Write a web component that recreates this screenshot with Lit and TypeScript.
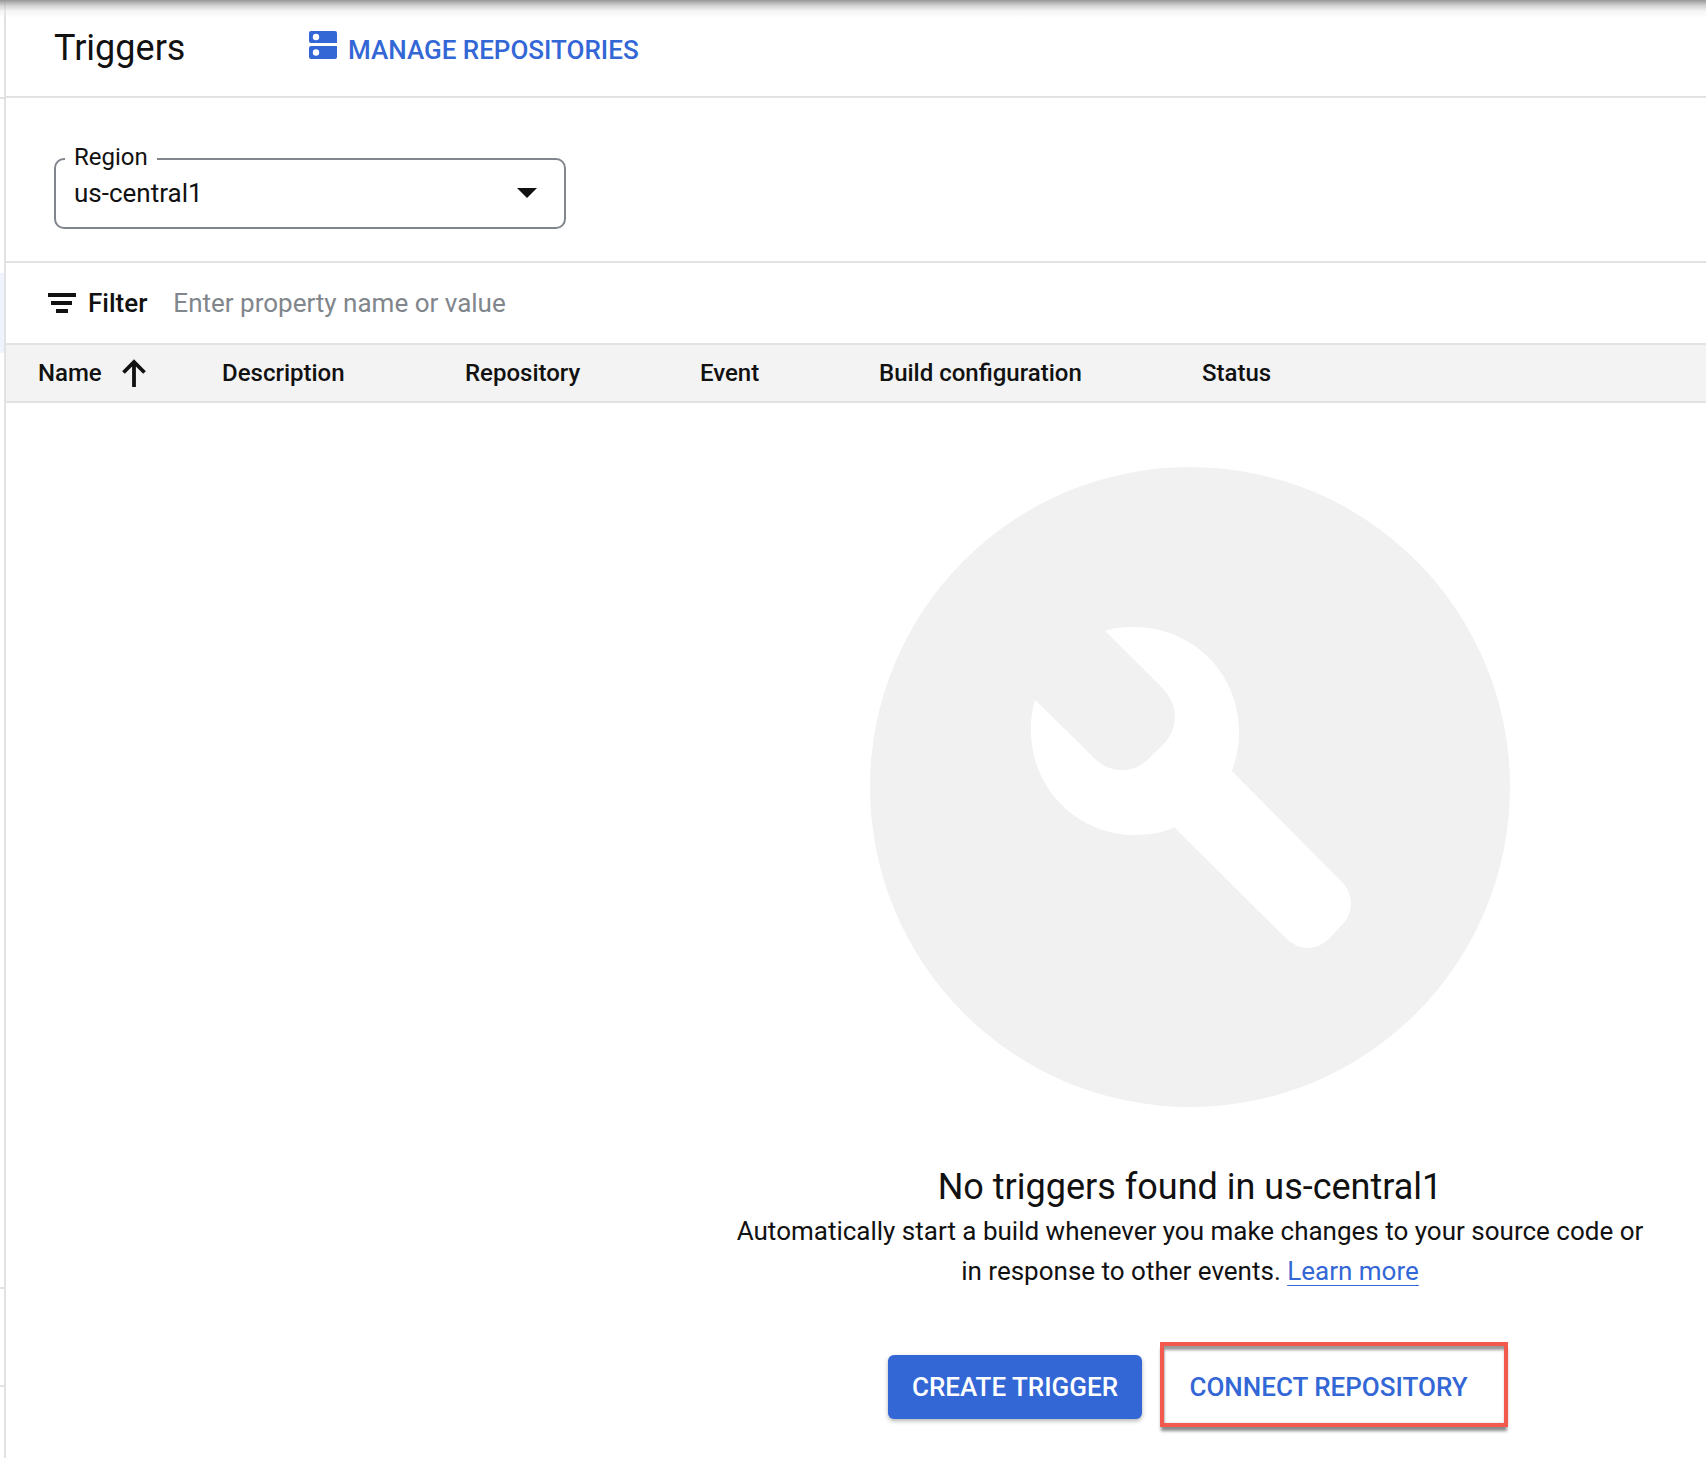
import { LitElement, css, html, svg } from "lit";
import { customElement } from "lit/decorators.js";

const COLUMNS = ["Description", "Repository", "Event", "Build configuration", "Status"];
const RAIL_TICKS = [97, 1287, 1385];

// wrench is traced in page coordinates, hence the viewBox origin
const WRENCH = svg`<path fill="#fff" d="M1104 630.7 L1161.7 688.3 C1178 705 1178 729 1161.7 745 L1148 758.3 C1133 774 1109 774 1093.3 758.3 L1034.3 700 C1030 712 1030 722 1030 731 C1030 788 1076 835 1133.3 835 C1148 835 1162 833 1173.3 827.3 L1285 938.3 C1298 951 1316 951 1328.3 938.3 L1340.7 925 C1353 913 1353 894 1340.7 881.7 L1230.7 771 C1235 761 1238 748 1238 731 C1238 673 1191 627 1133.3 627 C1122 627 1113 628 1104 630.7 Z"/>`;

@customElement("app-root")
export class AppRoot extends LitElement {
  static styles = css`
    :host {
      display: block;
      position: relative;
      height: 1458px;
      overflow: hidden;
      background: #fff;
      color: #111;
      font-family: Roboto, "Liberation Sans", sans-serif;
    }

    .shadow {
      position: absolute;
      inset: 0 0 auto 0;
      height: 18px;
      background: linear-gradient(rgba(140, 140, 140, 0.9), rgba(190, 190, 190, 0.7) 30%, rgba(235, 235, 235, 0.5) 62%, rgba(255, 255, 255, 0));
    }

    .rail {
      position: absolute;
      left: 0;
      top: 0;
      bottom: 0;
      width: 6px;
    }
    .rail-line {
      position: absolute;
      left: 4px;
      top: 0;
      bottom: 0;
      width: 2px;
      background: #e2e2e2;
    }
    .rail-tick {
      position: absolute;
      left: 0;
      width: 5px;
      height: 2px;
      background: #e2e2e2;
    }
    .rail-tint {
      position: absolute;
      left: 0;
      top: 273px;
      width: 4px;
      height: 80px;
      background: #eef3fd;
    }

    main {
      margin-left: 6px;
    }

    .header {
      display: flex;
      align-items: center;
      height: 96px;
      padding-left: 48px;
      border-bottom: 2px solid #e2e2e2;
    }
    h1 {
      margin: 0;
      width: 255px;
      font-size: 36px;
      font-weight: 400;
    }
    .manage {
      display: flex;
      align-items: center;
      gap: 11px;
      margin-top: 4px;
      color: #3367d6;
      font-size: 26px;
      font-weight: 500;
    }
    .manage svg {
      display: block;
      margin-top: -10px;
    }

    .region-row {
      height: 165px;
      box-sizing: border-box;
      padding: 60px 0 0 48px;
      border-bottom: 2px solid #e2e2e2;
    }
    .select {
      position: relative;
      display: flex;
      align-items: center;
      justify-content: space-between;
      box-sizing: border-box;
      width: 512px;
      height: 71px;
      padding: 0 27px 2px 18px;
      border: 2px solid #80868b;
      border-radius: 10px;
      font-size: 26px;
    }
    .select label {
      position: absolute;
      left: 9px;
      top: -18px;
      padding: 0 9px;
      background: #fff;
      font-size: 24px;
      line-height: 30px;
    }
    .caret {
      width: 0;
      height: 0;
      border-left: 10px solid transparent;
      border-right: 10px solid transparent;
      border-top: 10px solid #111;
    }

    .filter {
      display: flex;
      align-items: center;
      height: 80px;
      padding-left: 42px;
      border-bottom: 2px solid #e2e2e2;
      font-size: 26px;
    }
    .filter svg {
      display: block;
      margin-right: 12px;
    }
    .filter b {
      font-weight: 500;
      margin-right: 26px;
    }
    .filter span {
      color: #80868b;
    }

    .thead {
      display: grid;
      grid-template-columns: 184px 243px 235px 179px 323px auto;
      align-items: center;
      height: 56px;
      padding-left: 32px;
      background: #f3f3f3;
      border-bottom: 2px solid #e2e2e2;
      font-size: 24px;
      font-weight: 500;
    }
    .thead .name {
      display: flex;
      align-items: center;
      gap: 19px;
    }
    .thead svg {
      display: block;
    }

    .empty {
      display: flex;
      flex-direction: column;
      align-items: center;
      width: 1000px;
      margin-left: 684px;
      padding-top: 64px;
    }
    .art {
      display: block;
    }
    h2 {
      margin: 57px 0 0;
      font-size: 36px;
      font-weight: 400;
      line-height: 47px;
    }
    p {
      margin: 0;
      font-size: 26px;
      line-height: 40px;
      text-align: center;
    }
    a {
      color: #3367d6;
      text-decoration: underline;
      text-underline-offset: 5px;
      text-decoration-thickness: 1px;
    }
    .actions {
      display: flex;
      align-items: center;
      gap: 18px;
      margin: 51px 0 0 16px;
    }
    .btn {
      box-sizing: border-box;
      display: flex;
      align-items: center;
      justify-content: center;
      font-size: 26px;
      font-weight: 500;
    }
    .primary {
      width: 254px;
      height: 64px;
      margin-top: 2px;
      border-radius: 6px;
      background: #3367d6;
      color: #fff;
      box-shadow: 0 2px 4px rgba(60, 64, 67, 0.4);
    }
    .outlined {
      width: 348px;
      height: 85px;
      margin-bottom: 3px;
      padding: 4px 11px 0 0;
      border: 4px solid #f4594e;
      color: #3367d6;
      box-shadow: 0 5px 3px -1px #8a8a8a, inset 0 5px 3px -1px #9a9a9a, inset 1px 0 2px #c4c4c4;
    }
  `;

  render() {
    return html`
      <main>
        <div class="header">
          <h1>Triggers</h1>
          <div class="manage">
            <svg width="28" height="28" viewBox="0 0 28 28">
              <path
                fill="#3367d6"
                fill-rule="evenodd"
                d="M2 0H26A2 2 0 0 1 28 2V12H2A2 2 0 0 1 0 10V2A2 2 0 0 1 2 0ZM7 2.8A3.2 3.2 0 1 0 7 9.2A3.2 3.2 0 1 0 7 2.8ZM2 15H28V26A2 2 0 0 1 26 28H2A2 2 0 0 1 0 26V17A2 2 0 0 1 2 15ZM7 18.3A3.2 3.2 0 1 0 7 24.7A3.2 3.2 0 1 0 7 18.3Z"
              />
            </svg>
            MANAGE REPOSITORIES
          </div>
        </div>

        <div class="region-row">
          <div class="select">
            <label>Region</label>
            <span>us-central1</span>
            <i class="caret"></i>
          </div>
        </div>

        <div class="filter">
          <svg width="28" height="20" viewBox="0 0 28 20">
            <path fill="#111" d="M0 0H28V4H0ZM3 8H24V12H3ZM8 16H20V20H8Z" />
          </svg>
          <b>Filter</b>
          <span>Enter property name or value</span>
        </div>

        <div class="thead">
          <div class="name">
            Name
            <svg width="26" height="28" viewBox="0 0 26 28">
              <path fill="none" stroke="#111" stroke-width="3.8" d="M13 28V3M2.5 13.5L13 3L23.5 13.5" />
            </svg>
          </div>
          ${COLUMNS.map((c) => html`<div>${c}</div>`)}
        </div>

        <div class="empty">
          <svg class="art" width="640" height="640" viewBox="869 467 640 640">
            <circle cx="1189" cy="787" r="320" fill="#f1f1f1" />
            ${WRENCH}
          </svg>
          <h2>No triggers found in us-central1</h2>
          <p>
            Automatically start a build whenever you make changes to your source code or<br />
            in response to other events. <a>Learn more</a>
          </p>
          <div class="actions">
            <div class="btn primary">CREATE TRIGGER</div>
            <div class="btn outlined">CONNECT REPOSITORY</div>
          </div>
        </div>
      </main>

      <div class="rail">
        <div class="rail-line"></div>
        <div class="rail-tint"></div>
        ${RAIL_TICKS.map((y) => html`<div class="rail-tick" style="top:${y}px"></div>`)}
      </div>
      <div class="shadow"></div>
    `;
  }
}
